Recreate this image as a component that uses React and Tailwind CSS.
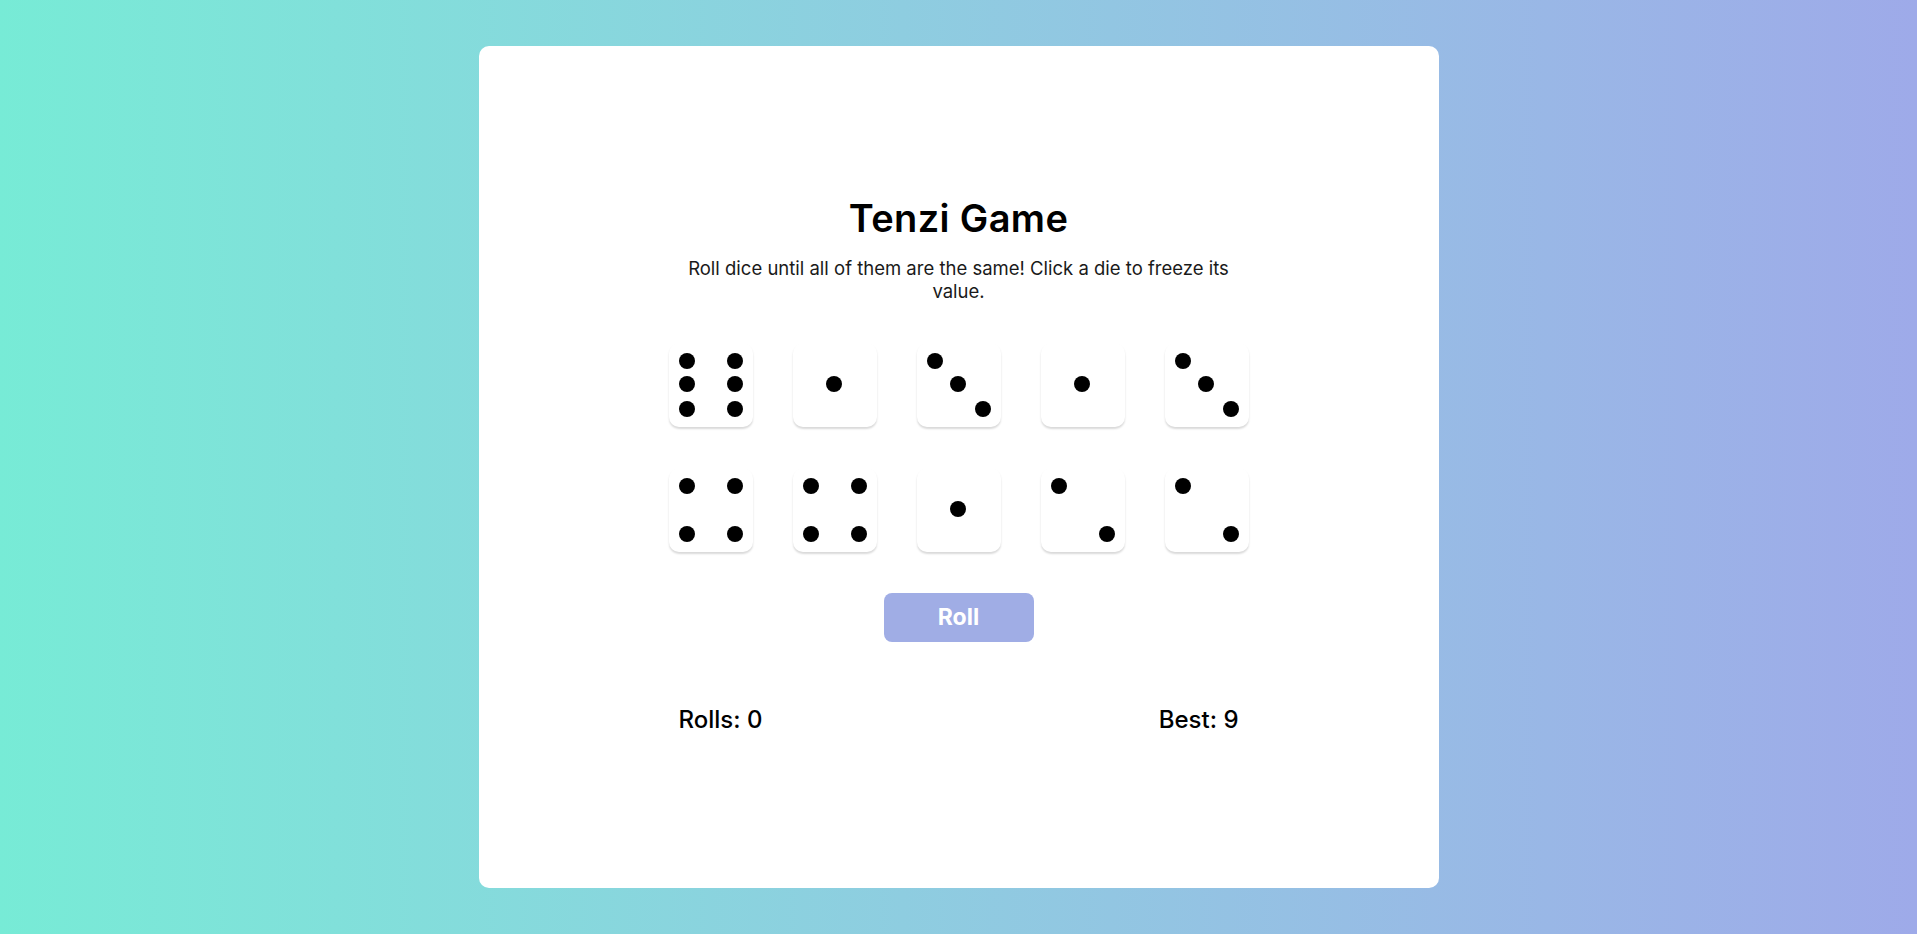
const rows = [
  [6, 1, 3, 1, 3],
  [4, 4, 1, 2, 2],
];

const faces = {
  1: [[1, 1]],
  2: [[0, 0], [2, 2]],
  3: [[0, 0], [1, 1], [2, 2]],
  4: [[0, 0], [2, 0], [0, 2], [2, 2]],
  5: [[0, 0], [2, 0], [1, 1], [0, 2], [2, 2]],
  6: [[0, 0], [2, 0], [0, 1], [2, 1], [0, 2], [2, 2]],
};

const colClass = [
  "col-start-1 justify-self-start",
  "col-start-2 justify-self-center",
  "col-start-3 justify-self-end",
];
const rowClass = [
  "row-start-1 self-start",
  "row-start-2 self-center",
  "row-start-3 self-end",
];

function Die({ value }) {
  return (
    <div className="w-[84px] h-[84px] rounded-[10px] bg-white shadow-[0_2px_2px_rgba(0,0,0,0.15)] grid grid-cols-3 grid-rows-3 p-[10px] cursor-pointer">
      {faces[value].map(([c, r], i) => (
        <span
          key={i}
          className={`w-4 h-4 rounded-full bg-black ${colClass[c]} ${rowClass[r]}`}
        ></span>
      ))}
    </div>
  );
}

export default function App() {
  return (
    <div className="min-h-screen w-full flex items-center justify-center bg-gradient-to-r from-[#77ebd6] to-[#9eaae9] font-['Inter',sans-serif] text-black">
      <main className="w-[960px] h-[842px] bg-white rounded-[10px] flex flex-col items-center justify-center pb-[6px]">
        <h1 className="text-[38px] leading-[46px] font-semibold tracking-[0.01em]">Tenzi Game</h1>
        <p className="mt-4 max-w-[560px] text-center text-[18.5px] leading-[23px] text-[#1a1a1a]">
          Roll dice until all of them are the same! Click a die to freeze its value.
        </p>

        <div className="mt-10 grid grid-cols-5 gap-x-10 gap-y-[41px]">
          {rows.flat().map((v, i) => (
            <Die key={i} value={v} />
          ))}
        </div>

        <button className="mt-[41px] w-[150px] h-[49px] rounded-lg bg-[#a0ade5] text-white text-[23px] font-bold">
          Roll
        </button>

        <div className="mt-16 w-[580px] px-[10px] flex justify-between text-[24px] leading-[28px] font-medium">
          <span>Rolls: 0</span>
          <span>Best: 9</span>
        </div>
      </main>
    </div>
  );
}
